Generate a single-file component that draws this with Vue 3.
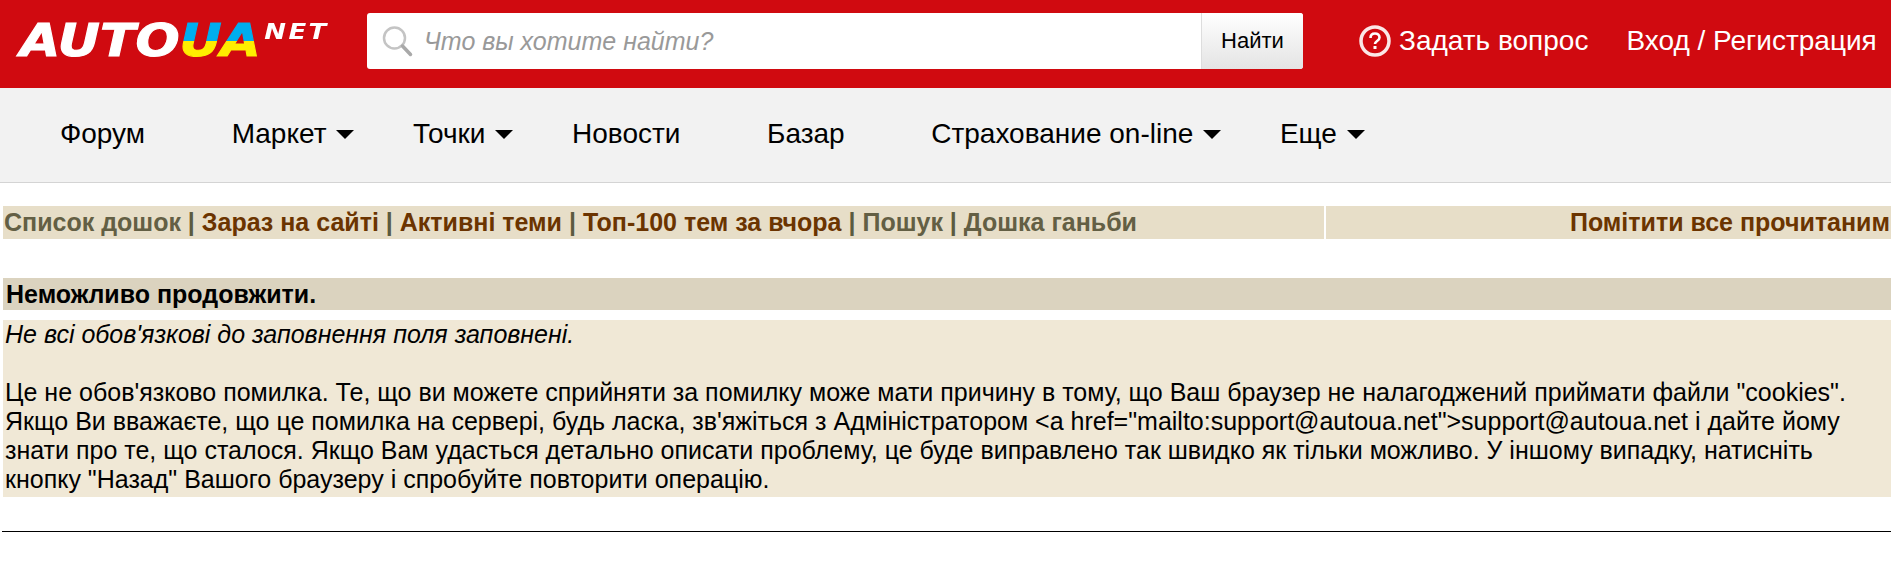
<script setup>
const nav = [
  { t: 'Форум' }, { t: 'Маркет', c: 1 }, { t: 'Точки', c: 1 }, { t: 'Новости' },
  { t: 'Базар' }, { t: 'Страхование on-line', c: 1 }, { t: 'Еще', c: 1 }
]
</script>

<template>
  <div class="page">
    <header class="top">
      <div class="logo">
        <div class="wordmark">
          <span class="auto">AUTO</span><span class="ua">UA</span><span class="net">NET</span>
        </div>
      </div>
      <div class="search">
        <div class="field">
          <svg class="glass" width="31" height="31" viewBox="0 0 31 31" fill="none">
            <circle cx="12.500" cy="12" r="10.500" stroke="#c4c4c4" stroke-width="2.500" />
            <path d="M20.500 20l8 8.500" stroke="#a9a9a9" stroke-width="3.500" stroke-linecap="round" />
          </svg>
          <span class="ph">Что вы хотите найти?</span>
        </div>
        <div class="btn">Найти</div>
      </div>
      <div class="ask">
        <svg width="32" height="32" viewBox="0 0 32 32" fill="none">
          <circle cx="16" cy="16" r="14" stroke="#fff" stroke-width="3.500" opacity=".9" />
          <path d="M11.500 13c0-3 2-4.500 4.500-4.500s4.500 1.600 4.500 4c0 3.500-4.500 3.500-4.500 6.500" stroke="#fff" stroke-width="2.600" />
          <rect x="14.500" y="21" width="3" height="3" fill="#fff" />
        </svg>
        <span>Задать вопрос</span>
      </div>
      <div class="login">Вход / Регистрация</div>
    </header>

    <nav class="nav">
      <div v-for="n in nav" :key="n.t" class="item">
        {{ n.t }}<i v-if="n.c" class="caret"></i>
      </div>
    </nav>

    <main class="content">
      <div class="bar">
        <div class="bar-left">
          <span class="muted">Список дошок</span> | <span class="brown">Зараз на сайті</span> | <span class="brown">Активні теми</span> | <span class="brown">Топ-100 тем за вчора</span> | <span class="muted">Пошук</span> | <span class="muted">Дошка ганьби</span>
        </div>
        <div class="bar-right"><span class="brown">Помітити все прочитаним</span></div>
      </div>

      <div class="err-head">Неможливо продовжити.</div>
      <div class="err-body">
        <em>Не всі обов'язкові до заповнення поля заповнені.</em><br /><br />
        Це не обов'язково помилка. Те, що ви можете сприйняти за помилку може мати причину в тому, що Ваш браузер не налагоджений приймати файли "cookies". Якщо Ви вважаєте, що це помилка на сервері, будь ласка, зв'яжіться з Адміністратором &lt;a href="mailto:support@autoua.net"&gt;support@autoua.net і дайте йому знати про те, що сталося. Якщо Вам удасться детально описати проблему, це буде виправлено так швидко як тільки можливо. У іншому випадку, натисніть кнопку "Назад" Вашого браузеру і спробуйте повторити операцію.
      </div>
      <hr class="rule" />
    </main>
  </div>
</template>

<style>
html, body { margin: 0; background: #fff; overflow: hidden; }
</style>

<style scoped>
.page { width: 1891px; height: 561px; font-family: "Liberation Sans", Arial, sans-serif; color: #000; overflow: hidden; }
.top { height: 88px; box-sizing: border-box; padding-bottom: 6px; background: #d00a10; display: flex; align-items: center; color: #fff; }
.logo { width: 367px; height: 82px; padding: 21px 0 0 20px; box-sizing: border-box; flex: none; }
.wordmark { display: flex; align-items: flex-start; height: 40px; transform: scaleX(1.18); transform-origin: left top; font-family: "DejaVu Sans", sans-serif; font-weight: 700; font-style: italic; }
.auto, .ua { font-size: 44px; line-height: 40px; }
.auto { color: #fff; -webkit-text-stroke: 1px #fff; }
.ua { padding-right: 6px; margin-right: -6px; letter-spacing: 1px; background: linear-gradient(#00aeef 0 50%, #ffed00 50% 100%); -webkit-background-clip: text; background-clip: text; color: transparent; -webkit-text-stroke: 1px transparent; }
.net { font-size: 22px; line-height: 20px; letter-spacing: 2px; color: #fff; margin: 1px 0 0 2px; }
.search { width: 936px; height: 56px; display: flex; border-radius: 3px; overflow: hidden; background: #fff; flex: none; }
.field { flex: 1; display: flex; align-items: center; padding-left: 15px; }
.glass { flex: none; }
.ph { font-size: 25px; font-style: italic; color: #999; margin-left: 11px; }
.btn { width: 102px; border-left: 1px solid #ddd; box-sizing: border-box; background: linear-gradient(#fff, #e4e4e4); color: #000; font-size: 22px; display: flex; align-items: center; justify-content: center; }
.ask { margin-left: 56px; display: flex; align-items: center; gap: 8px; font-size: 28px; flex: none; }
.login { margin-left: 38px; font-size: 28px; flex: none; white-space: nowrap; }
.nav { height: 95px; box-sizing: border-box; padding: 0 0 2px 60px; background: #f2f2f2; border-bottom: 1px solid #d4d4d4; display: flex; align-items: center; gap: 86.6px; }
.item { font-size: 28px; display: flex; align-items: center; white-space: nowrap; }
.caret { width: 0; height: 0; border: 9px solid transparent; border-top-color: #000; border-bottom: 0; margin: 0 -28px 0 10px; }
.content { padding: 23px 0 0 3px; }
.bar { display: flex; height: 33px; background: #e7dec8; font-size: 25px; font-weight: 700; line-height: 33px; color: #5b5b3f; }
.bar-left { width: 1323px; padding-left: 1px; box-sizing: border-box; border-right: 2px solid #fff; white-space: nowrap; }
.bar-right { flex: 1; text-align: right; padding-right: 1px; white-space: nowrap; }
.muted { color: #635f44; }
.brown { color: #6b3400; }
.err-head { margin-top: 39px; height: 32px; line-height: 32px; background: #dbd3bf; font-size: 25px; font-weight: 700; padding-left: 3px; }
.err-body { margin-top: 10px; background: #f0e8d6; font-size: 25px; line-height: 29px; padding: 0 2px; height: 177px; }
.rule { margin: 34px 0 0 -1px; border: 0; height: 1px; background: #000; }
</style>
